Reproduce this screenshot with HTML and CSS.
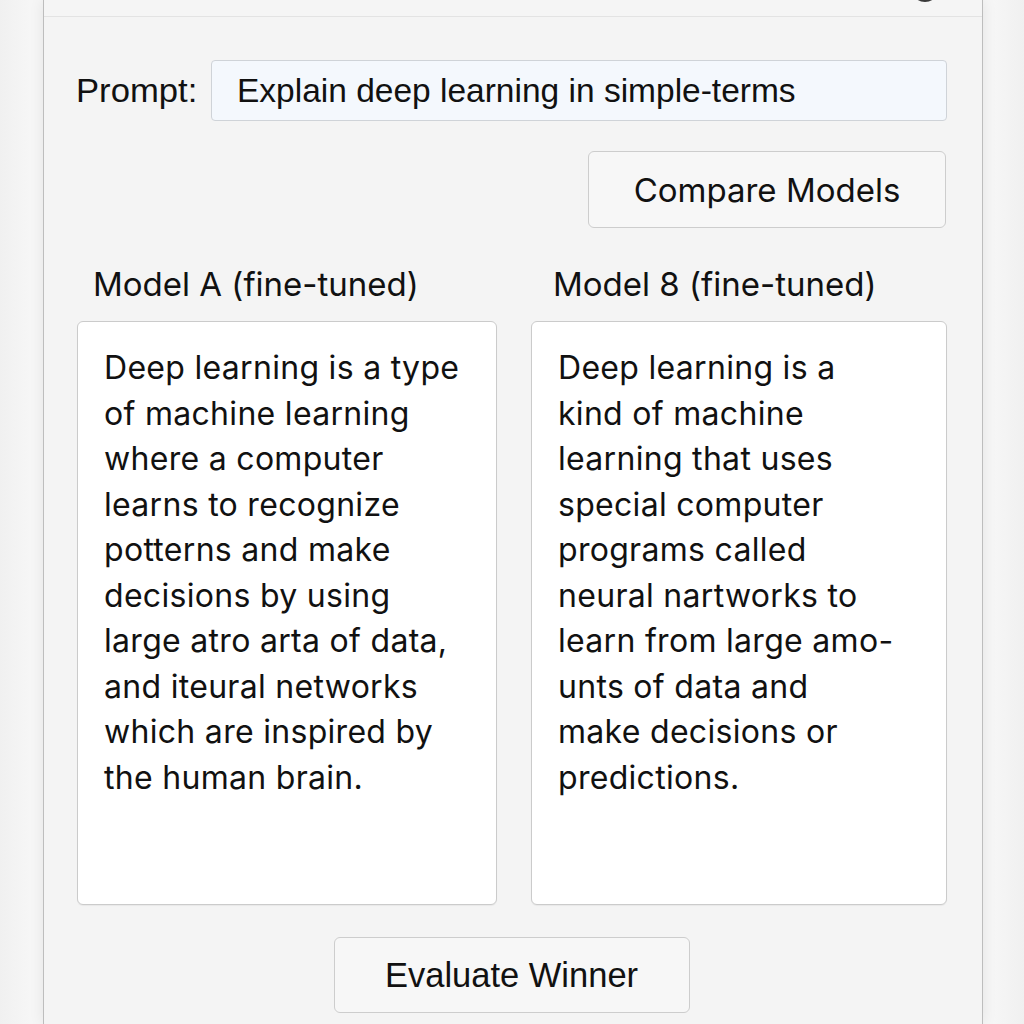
FILE: index.html
```html
<!DOCTYPE html>
<html>
<head>
<meta charset="utf-8">
<link rel="stylesheet" href="styles.css">
</head>
<body>
<div class="window">
  <div class="titlebar"><span class="dot"></span></div>
  <div class="content">
    <div class="prompt-row">
      <span class="prompt-label">Prompt:</span>
      <div class="prompt-input">Explain deep learning in simple-terms</div>
    </div>
    <div class="compare-row">
      <button class="btn btn-compare">Compare Models</button>
    </div>
    <div class="models">
      <div class="model">
        <div class="model-title title-a">Model A (fine-tuned)</div>
        <div class="panel">Deep learning is a type<br>of machine learning<br>where a computer<br>learns to recognize<br>potterns and make<br>decisions by using<br>large atro arta of data,<br>and iteural networks<br>which are inspired by<br>the human brain.</div>
      </div>
      <div class="model">
        <div class="model-title title-b">Model 8 (fine-tuned)</div>
        <div class="panel">Deep learning is a<br>kind of machine<br>learning that uses<br>special computer<br>programs called<br>neural nartworks to<br>learn from large amo-<br>unts of data and<br>make decisions or<br>predictions.</div>
      </div>
    </div>
    <div class="eval-row">
      <button class="btn btn-eval">Evaluate Winner</button>
    </div>
  </div>
</div>
</body>
</html>
```
FILE: styles.css
```css
html, body {
  margin: 0;
  padding: 0;
}
body {
  background: linear-gradient(to right, #f0f0f0 0, #f6f6f6 30px, #f6f6f6 994px, #f0f0f0 1024px);
  height: 1024px;
  overflow: hidden;
  font-family: "Liberation Sans", Arial, sans-serif;
  color: #111;
}
.window {
  margin-left: 43px;
  width: 938px;
  height: 1024px;
  background: #f4f4f4;
  border-left: 1px solid #bdbdbd;
  border-right: 1px solid #bdbdbd;
  box-shadow: 0 0 14px rgba(0,0,0,0.08);
}
.titlebar {
  height: 16px;
  border-bottom: 1px solid #e3e3e3;
  position: relative;
  background: #f5f5f5;
}
.dot {
  position: absolute;
  left: 867px;
  top: -26px;
  width: 28px;
  height: 28px;
  border-radius: 50%;
  background: #3a3a3a;
}
.content {
  padding: 43px 35px 0 32px;
}
.prompt-row {
  display: flex;
  align-items: center;
  height: 61px;
}
.prompt-label {
  font-size: 33px;
  width: 135px;
  flex: none;
  transform: scaleX(1.05);
  transform-origin: left center;
}
.prompt-input {
  flex: 1;
  box-sizing: border-box;
  height: 61px;
  background: #f4f8fd;
  border: 1px solid #cfd3d8;
  border-radius: 4px;
  padding-left: 25px;
  display: flex;
  align-items: center;
  font-size: 33.5px;
}
.compare-row {
  display: flex;
  justify-content: flex-end;
  margin-top: 30px;
}
.btn {
  background: #f7f7f7;
  border: 1px solid #cdcdcd;
  border-radius: 6px;
  color: #111;
  padding: 0;
  margin: 0;
}
.btn-compare {
  width: 358px;
  height: 77px;
  margin-right: 1px;
  font-family: Inter, "Noto Sans", sans-serif;
  font-size: 33px;
}
.models {
  display: grid;
  grid-template-columns: 420px 416px;
  column-gap: 34px;
  margin-left: 1px;
  margin-top: 36px;
}
.model-title {
  font-family: Inter, "Noto Sans", sans-serif;
  font-size: 33px;
  height: 57px;
  line-height: 40px;
}
.title-a { padding-left: 16px; }
.title-b { padding-left: 22px; }
.panel {
  background: #fff;
  border: 1px solid #cbcbcb;
  border-radius: 6px;
  height: 584px;
  box-sizing: border-box;
  padding: 23px 6px 0 26px;
  font-family: Inter, "Noto Sans", sans-serif;
  font-size: 32px;
  letter-spacing: 0.3px;
  line-height: 45.5px;
  color: #111;
  box-shadow: 0 1px 1px rgba(0,0,0,0.05);
  white-space: nowrap;
}
.eval-row {
  display: flex;
  justify-content: center;
  margin-top: 32px;
}
.btn-eval {
  width: 356px;
  height: 76px;
  font-family: "Liberation Sans", Arial, sans-serif;
  font-size: 34.5px;
}
```
